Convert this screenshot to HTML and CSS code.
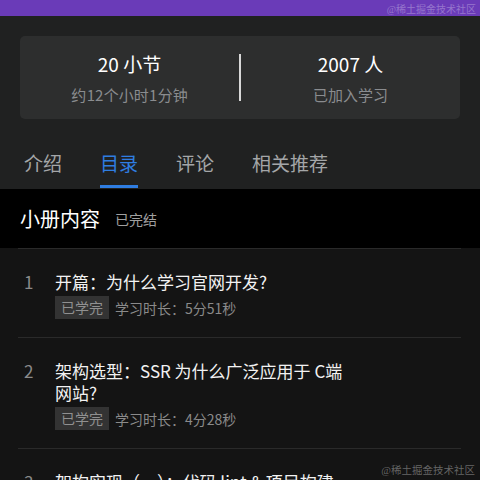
FILE: index.html
```html
<!DOCTYPE html>
<html lang="zh-CN">
<head>
    <meta charset="UTF-8">
    <meta name="viewport" content="width=device-width, initial-scale=1.0">
    <title>小册目录</title>
    <link rel="stylesheet" href="styles.css">
</head>
<body>
    <div class="topbar">
        <span class="mark">@稀土掘金技术社区</span>
    </div>
    <div class="head">
        <div class="stats">
            <div class="stat">
                <div class="stat-num">20 小节</div>
                <div class="stat-sub">约 12 个小时 1 分钟</div>
            </div>
            <div class="stat-line"></div>
            <div class="stat">
                <div class="stat-num">2007 人</div>
                <div class="stat-sub">已加入学习</div>
            </div>
        </div>
        <nav class="tabs">
            <a href="#">介绍</a>
            <a href="#" class="active">目录</a>
            <a href="#">评论</a>
            <a href="#">相关推荐</a>
        </nav>
    </div>
    <div class="section-title">
        <h2>小册内容</h2>
        <span>已完结</span>
    </div>
    <ul class="chapters">
        <li class="chapter">
            <span class="num">1</span>
            <div class="info">
                <div class="title">开篇：为什么学习官网开发?</div>
                <div class="meta"><span class="badge">已学完</span>学习时长：5分51秒</div>
            </div>
        </li>
        <li class="chapter">
            <span class="num">2</span>
            <div class="info">
                <div class="title">架构选型：SSR 为什么广泛应用于 C端网站?</div>
                <div class="meta"><span class="badge">已学完</span>学习时长：4分28秒</div>
            </div>
        </li>
        <li class="chapter">
            <span class="num">3</span>
            <div class="info">
                <div class="title">架构实现（一）：代码 lint &amp; 项目构建</div>
                <div class="meta"><span class="badge">已学完</span>学习时长：6分10秒</div>
            </div>
        </li>
    </ul>
    <div class="mark-bottom">@稀土掘金技术社区</div>
</body>
</html>
```

FILE: styles.css
```css
body {
    font-family: "Noto Sans CJK SC", "Noto Sans", sans-serif;
    margin: 0;
    padding: 0;
    background-color: #141414;
    color: #fff;
    height: 480px;
    overflow: hidden;
    position: relative;
}
.topbar {
    height: 16px;
    background-color: #6a3bb8;
    display: flex;
    justify-content: flex-end;
    align-items: center;
    padding-right: 4px;
}
.mark {
    font-family: "Liberation Serif", "Noto Sans CJK SC", serif;
    font-size: 10px;
    color: rgba(255,255,255,0.3);
}
.head {
    background-color: #202121;
    padding: 20px 20px 0;
}
.stats {
    display: flex;
    align-items: center;
    height: 83px;
    background-color: #2d2e2e;
    border-radius: 5px;
}
.stat {
    flex: 1;
    text-align: center;
}
.stat-num {
    font-size: 19px;
    line-height: 26px;
}
.stat-sub {
    margin-top: 8px;
    font-size: 15px;
    line-height: 20px;
    color: #8a8c8f;
    word-spacing: -3px;
}
.stat-line {
    width: 2px;
    height: 47px;
    background-color: #d8d8d8;
}
.tabs {
    display: flex;
    gap: 38px;
    padding: 31px 0 0 4px;
}
.tabs a {
    color: #a4a6a8;
    text-decoration: none;
    font-size: 19px;
    line-height: 26px;
    padding-bottom: 9px;
    border-bottom: 3px solid transparent;
    margin-bottom: 1px;
}
.tabs a.active {
    color: #2f7de1;
    border-bottom-color: #2f7de1;
}
.section-title {
    background-color: #000;
    height: 59px;
    display: flex;
    align-items: center;
    padding: 0 20px;
    gap: 15px;
}
.section-title h2 {
    margin: 0;
    font-size: 20px;
    font-weight: normal;
}
.section-title span {
    font-size: 14px;
    color: #a0a0a0;
}
.chapters {
    list-style: none;
    margin: 0;
    padding: 0 19px 0 18px;
}
.chapter {
    display: flex;
    border-top: 1px solid #2a2a2a;
    padding: 22px 0 18px;
}
.num {
    width: 37px;
    padding-left: 6px;
    box-sizing: border-box;
    font-size: 17px;
    line-height: 22px;
    color: #8a8a8a;
}
.info {
    width: 300px;
}
.title {
    font-size: 17px;
    line-height: 22px;
    color: #f2f2f2;
}
.meta {
    display: flex;
    align-items: center;
    gap: 6px;
    margin-top: 3px;
    font-size: 14px;
    color: #8a8a8a;
}
.badge {
    background-color: #333;
    color: #909090;
    padding: 0 6px;
    line-height: 23px;
}
.mark-bottom {
    position: absolute;
    right: 5px;
    bottom: 3px;
    font-family: "Liberation Serif", "Noto Sans CJK SC", serif;
    font-size: 10.5px;
    color: rgba(200,200,200,0.45);
}
```
